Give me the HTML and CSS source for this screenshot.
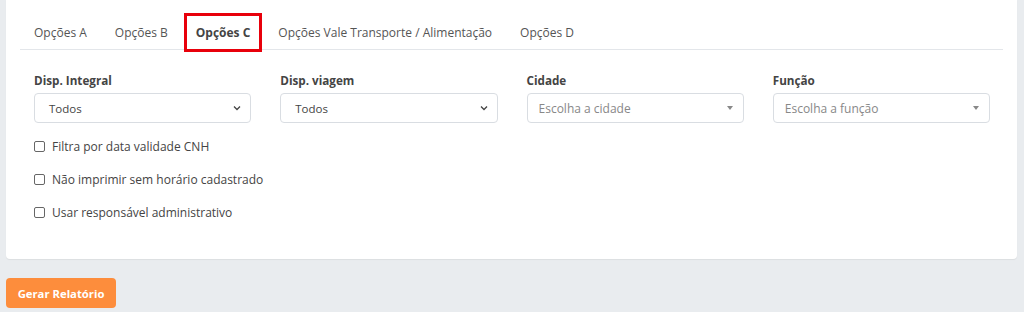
FILE: index.html
```html
<!DOCTYPE html>
<html lang="pt-BR">
<head>
    <meta charset="UTF-8">
    <title>Relatório</title>
    <link rel="stylesheet" href="styles.css">
</head>
<body>
    <div class="card">
        <ul class="tabs">
            <li class="tab">Opções A</li>
            <li class="tab">Opções B</li>
            <li class="tab active">Opções C</li>
            <li class="tab">Opções Vale Transporte / Alimentação</li>
            <li class="tab">Opções D</li>
        </ul>

        <div class="row">
            <div class="col">
                <label class="field-label">Disp. Integral</label>
                <div class="select">
                    <span>Todos</span>
                    <svg class="chevron" width="8" height="6" viewBox="0 0 8 6"><path d="M1 1.5 L4 4.5 L7 1.5" fill="none" stroke="#444" stroke-width="1.3"/></svg>
                </div>
            </div>
            <div class="col">
                <label class="field-label">Disp. viagem</label>
                <div class="select">
                    <span>Todos</span>
                    <svg class="chevron" width="8" height="6" viewBox="0 0 8 6"><path d="M1 1.5 L4 4.5 L7 1.5" fill="none" stroke="#444" stroke-width="1.3"/></svg>
                </div>
            </div>
            <div class="col">
                <label class="field-label">Cidade</label>
                <div class="select select2">
                    <span class="placeholder">Escolha a cidade</span>
                    <span class="caret"></span>
                </div>
            </div>
            <div class="col">
                <label class="field-label">Função</label>
                <div class="select select2">
                    <span class="placeholder">Escolha a função</span>
                    <span class="caret"></span>
                </div>
            </div>
        </div>

        <div class="checks">
            <label class="check"><span class="box"></span>Filtra por data validade CNH</label>
            <label class="check"><span class="box"></span>Não imprimir sem horário cadastrado</label>
            <label class="check"><span class="box"></span>Usar responsável administrativo</label>
        </div>
    </div>

    <button class="btn-report">Gerar Relatório</button>
</body>
</html>
```

FILE: styles.css
```css
/* General */
body {
    margin: 0;
    padding: 0 7px 0 6px;
    background-color: #e9ecef;
    font-family: "Open Sans", "Noto Sans", sans-serif;
    font-size: 12px;
    color: #555;
}

.card {
    background: white;
    border-radius: 0 0 4px 4px;
    box-shadow: 0 1px 1px rgba(0, 0, 0, 0.06);
    padding: 13px 13px 0 13px;
    height: 259px;
    box-sizing: border-box;
}

/* Tabs */
.tabs {
    list-style: none;
    margin: 0 1px;
    padding: 0;
    display: flex;
    align-items: flex-start;
    border-bottom: 1px solid #e3e6ea;
}

.tab {
    padding: 10.5px 14px 8.5px 14px;
    line-height: 17px;
    color: #555;
}

.tab.active {
    border: 3px solid #e8000b;
    padding: 7.5px 9px 8.5px 9px;
    margin: 0 2px -3px 2px;
    font-weight: 700;
    color: #444;
    background: white;
}

/* Fields */
.row {
    display: flex;
    margin-top: 22px;
}

.col {
    flex: 1;
    padding: 0 14px 0 15px;
}

.field-label {
    display: block;
    font-weight: 700;
    color: #444;
    font-size: 11.7px;
    line-height: 17px;
    margin-bottom: 4px;
}

.select {
    height: 30px;
    box-sizing: border-box;
    border: 1px solid #d9dde2;
    border-radius: 4px;
    display: flex;
    align-items: center;
    justify-content: space-between;
    padding: 0 9px 0 14px;
    color: #444;
    font-size: 11.5px;
}

.select2 {
    padding-left: 11px;
    padding-right: 10px;
    font-size: 12px;
}

.placeholder {
    color: #888;
}

.caret {
    width: 0;
    height: 0;
    border-left: 3.5px solid transparent;
    border-right: 3.5px solid transparent;
    border-top: 4px solid #888;
}

/* Checkboxes */
.checks {
    margin-top: 7px;
    padding-left: 15px;
}

.check {
    display: flex;
    align-items: center;
    height: 33px;
    color: #444;
    font-size: 12px;
}

.check .box {
    width: 9px;
    height: 9px;
    border: 1px solid #666;
    border-radius: 2px;
    margin-right: 7px;
}

/* Button */
.btn-report {
    margin-top: 19px;
    background-color: #fd8d3c;
    color: white;
    border: none;
    border-radius: 4px;
    font-family: inherit;
    font-weight: 700;
    font-size: 11.3px;
    height: 30px;
    width: 110px;
    cursor: pointer;
}
```
